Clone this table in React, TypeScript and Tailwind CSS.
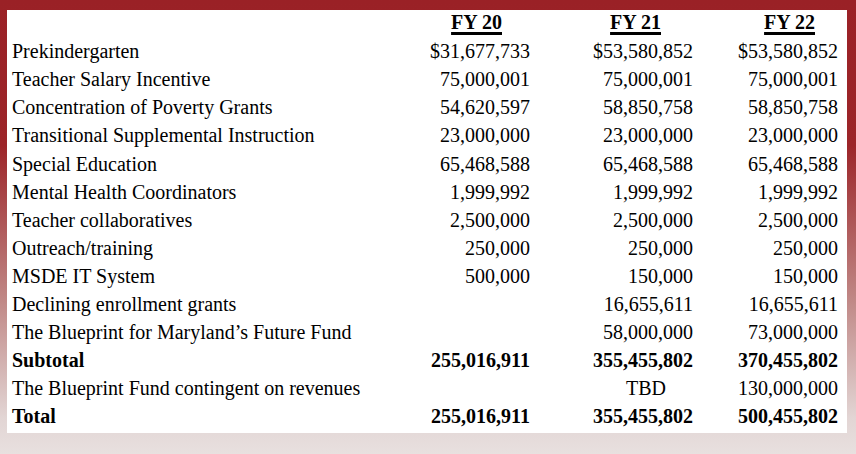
const rows: { label: string; fy20: string; fy21: string; fy22: string; bold?: boolean }[] = [
  { label: "Prekindergarten", fy20: "$31,677,733", fy21: "$53,580,852", fy22: "$53,580,852" },
  { label: "Teacher Salary Incentive", fy20: "75,000,001", fy21: "75,000,001", fy22: "75,000,001" },
  { label: "Concentration of Poverty Grants", fy20: "54,620,597", fy21: "58,850,758", fy22: "58,850,758" },
  { label: "Transitional Supplemental Instruction", fy20: "23,000,000", fy21: "23,000,000", fy22: "23,000,000" },
  { label: "Special Education", fy20: "65,468,588", fy21: "65,468,588", fy22: "65,468,588" },
  { label: "Mental Health Coordinators", fy20: "1,999,992", fy21: "1,999,992", fy22: "1,999,992" },
  { label: "Teacher collaboratives", fy20: "2,500,000", fy21: "2,500,000", fy22: "2,500,000" },
  { label: "Outreach/training", fy20: "250,000", fy21: "250,000", fy22: "250,000" },
  { label: "MSDE IT System", fy20: "500,000", fy21: "150,000", fy22: "150,000" },
  { label: "Declining enrollment grants", fy20: "", fy21: "16,655,611", fy22: "16,655,611" },
  { label: "The Blueprint for Maryland\u2019s Future Fund", fy20: "", fy21: "58,000,000", fy22: "73,000,000" },
  { label: "Subtotal", fy20: "255,016,911", fy21: "355,455,802", fy22: "370,455,802", bold: true },
  { label: "The Blueprint Fund contingent on revenues", fy20: "", fy21: "TBD", fy22: "130,000,000" },
  { label: "Total", fy20: "255,016,911", fy21: "355,455,802", fy22: "500,455,802", bold: true },
];

export default function App() {
  return (
    <div className="w-[856px] h-[454px] pl-[7px] pt-[10px] bg-[linear-gradient(to_bottom,#9a2126_0%,#9c2529_32%,#c08886_66%,#e2d5d4_92%,#e8e0df_100%)]">
      <div className="w-[840px] h-[423px] bg-white pl-[5px] pt-[1px] font-['Liberation_Serif',serif] text-[20px] text-black">
        {/* header */}
        <div className="grid grid-cols-[418px_100px_163px_145px] leading-[23.5px] font-bold">
          <div />
          <div className="text-right pr-[28px]">
            <span className="underline decoration-[3px] underline-offset-[3px]">FY 20</span>
          </div>
          <div className="text-right pr-[32px]">
            <span className="underline decoration-[3px] underline-offset-[3px]">FY 21</span>
          </div>
          <div className="text-right pr-[23px]">
            <span className="underline decoration-[3px] underline-offset-[3px]">FY 22</span>
          </div>
        </div>
        <div className="mt-[2.7px]">
          {rows.map((r) => (
            <div
              key={r.label}
              className={`grid grid-cols-[418px_100px_163px_145px] leading-[28.08px] ${r.bold ? "font-bold" : ""}`}
            >
              <div>{r.label}</div>
              <div className="text-right">{r.fy20}</div>
              <div className={r.fy21 === "TBD" ? "text-right pr-[27px]" : "text-right"}>{r.fy21}</div>
              <div className="text-right">{r.fy22}</div>
            </div>
          ))}
        </div>
      </div>
    </div>
  );
}
